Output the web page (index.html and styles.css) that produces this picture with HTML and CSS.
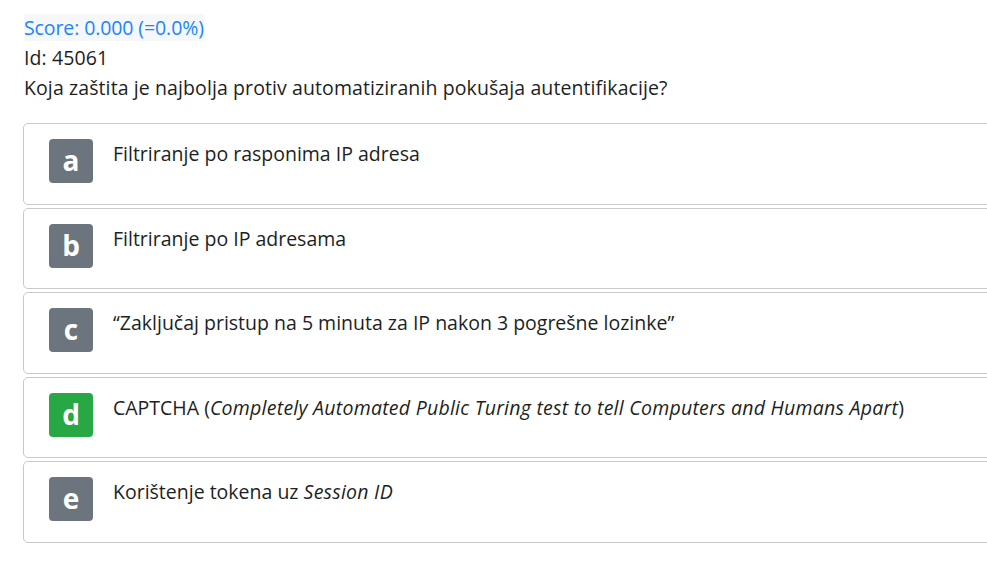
FILE: index.html
```html
<!DOCTYPE html>
<html>
<head>
<meta charset="utf-8">
<link rel="stylesheet" href="styles.css">
</head>
<body>
<div class="page">
  <div class="meta"><span class="score">Score: 0.000 (=0.0%)</span></div>
  <div class="meta">Id: 45061</div>
  <div class="meta">Koja zaštita je najbolja protiv automatiziranih pokušaja autentifikacije?</div>
  <div class="answers">
    <div class="answer"><div class="badge">a</div><div class="text">Filtriranje po rasponima IP adresa</div></div>
    <div class="answer"><div class="badge">b</div><div class="text">Filtriranje po IP adresama</div></div>
    <div class="answer"><div class="badge">c</div><div class="text">“Zaključaj pristup na 5 minuta za IP nakon 3 pogrešne lozinke”</div></div>
    <div class="answer"><div class="badge correct">d</div><div class="text">CAPTCHA (<em>Completely Automated Public Turing test to tell Computers and Humans Apart</em>)</div></div>
    <div class="answer"><div class="badge">e</div><div class="text">Korištenje tokena uz <em>Session ID</em></div></div>
  </div>
</div>
</body>
</html>
```
FILE: styles.css
```css
html, body {
  margin: 0;
  padding: 0;
  background: #fff;
  overflow: hidden;
}
body {
  font-family: "Open Sans", "Noto Sans", sans-serif;
  font-size: 19.5px;
  color: #1c1f23;
}
.page {
  padding: 13px 0 0 23px;
}
.meta {
  line-height: 30px;
  padding-left: 1px;
  letter-spacing: 0.1px;
}
.score {
  color: #1a85ff;
  background: #f5f7f9;
  letter-spacing: -0.1px;
}
.answers {
  margin-top: 20px;
  display: flex;
  flex-direction: column;
  gap: 3px;
}
.answer {
  width: 1000px;
  box-sizing: border-box;
  height: 81.5px;
  border: 1px solid #c9c9c9;
  border-radius: 5px;
  padding: 15px 0 0 25px;
  display: flex;
  align-items: flex-start;
  gap: 20px;
}
.badge {
  width: 44px;
  height: 44px;
  flex: none;
  border-radius: 4px;
  background: #6c757d;
  color: #fff;
  font-weight: 700;
  font-size: 28px;
  display: flex;
  align-items: center;
  justify-content: center;
  line-height: 1;
  padding-bottom: 2px;
  box-sizing: border-box;
}
.badge.correct {
  background: #28a745;
}
.text {
  line-height: 27px;
  padding-top: 1px;
}
.text em {
  letter-spacing: 0.25px;
}
```
